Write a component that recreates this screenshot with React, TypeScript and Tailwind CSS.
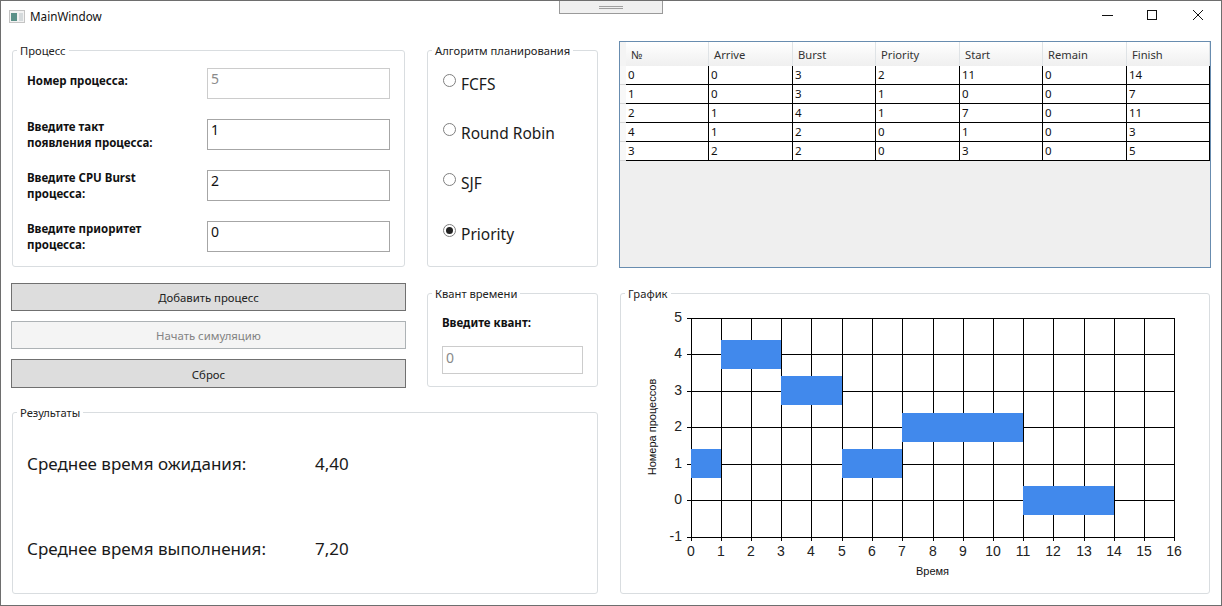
import React from "react"

const rows = [
    ["0", "0", "3", "2", "11", "0", "14"],
    ["1", "0", "3", "1", "0", "0", "7"],
    ["2", "1", "4", "1", "7", "0", "11"],
    ["4", "1", "2", "0", "1", "0", "3"],
    ["3", "2", "2", "0", "3", "0", "5"],
]
const headers = ["№", "Arrive", "Burst", "Priority", "Start", "Remain", "Finish"]

// chart grid lines, in page pixels
const xTicks = [691, 721, 751, 781, 811, 842, 872, 902, 933, 963, 993, 1023, 1053, 1084, 1114, 1144, 1174]
const yTicks = [318, 354, 391, 427, 464, 500, 537]
const bars = [
    { x: 691, w: 30, y: 449 },
    { x: 721, w: 60, y: 340 },
    { x: 781, w: 61, y: 376 },
    { x: 842, w: 60, y: 449 },
    { x: 902, w: 121, y: 413 },
    { x: 1023, w: 91, y: 486 },
]

function Group({ title, className, children }: { title: string; className: string; children?: React.ReactNode }) {
    return (
        <div className={`relative box-border rounded-[3px] border border-[#d9dde0] bg-white ${className}`}>
            <span className="absolute left-[4px] top-[-8px] bg-white px-[3px] text-[11.2px] leading-[16px] text-[#222]">{title}</span>
            {children}
        </div>
    )
}

function Field({ label, value, disabled }: { label: React.ReactNode; value: string; disabled?: boolean }) {
    return (
        <div className="flex h-[31px] items-start">
            <div className="w-[194px] pl-[14px] text-[11.5px] font-bold leading-[16px] text-[#111]">{label}</div>
            <input
                readOnly
                value={value}
                className={`box-border h-[31px] w-[183px] border px-[3px] pb-[10px] text-[14px] outline-none ${disabled ? "border-[#cccccc] text-[#8a8a8a]" : "border-[#a6a6a6] text-[#111]"}`}
            />
        </div>
    )
}

function Radio({ label, checked, className }: { label: string; checked?: boolean; className: string }) {
    return (
        <div className={`flex h-[24px] items-start pl-[15px] ${className}`}>
            <span className="mt-[2px] flex h-[13px] w-[13px] items-center justify-center rounded-full border border-[#808080] bg-white">
                {checked && <span className="h-[7px] w-[7px] rounded-full bg-[#222]" />}
            </span>
            <span className="ml-[5px] text-[15.5px] leading-[24px] text-[#1a1a1a]">{label}</span>
        </div>
    )
}

function Chart() {
    return (
        <svg viewBox="621 294 588 299" className="block h-[299px] w-[588px]" style={{ fontFamily: "'Liberation Sans', sans-serif" }}>
            {xTicks.map((x) => (
                <line key={x} x1={x + 0.5} x2={x + 0.5} y1={318} y2={541} stroke="#000" />
            ))}
            {yTicks.map((y) => (
                <line key={y} x1={687} x2={1175} y1={y + 0.5} y2={y + 0.5} stroke="#000" />
            ))}
            {bars.map((b) => (
                <rect key={b.x} x={b.x} y={b.y} width={b.w} height={29} fill="#4189ec" />
            ))}
            {xTicks.map((x, i) => (
                <text key={x} x={x} y={556} fontSize={14} textAnchor="middle" fill="#222">{i}</text>
            ))}
            {yTicks.map((y, i) => (
                <text key={y} x={682} y={y + 4} fontSize={14} textAnchor="end" fill="#222">{5 - i}</text>
            ))}
            <text x={932.5} y={575} fontSize={11} textAnchor="middle" fill="#111">Время</text>
            <text transform="translate(656 427) rotate(-90)" fontSize={11} textAnchor="middle" fill="#111">Номера процессов</text>
        </svg>
    )
}

export default function App() {
    return (
        <div className="relative box-border h-[606px] w-[1222px] overflow-hidden border border-[#6e6e6e] bg-white font-['Noto_Sans','Liberation_Sans',sans-serif]">
            {/* Designer handle at the top */}
            <div className="absolute left-[558px] top-[-1px] flex h-[14px] w-[104px] flex-col items-center justify-center gap-[1px] border border-[#9a9a9a] bg-[#f0f0f0]">
                <div className="h-px w-[24px] bg-[#a0a0a0]" />
                <div className="h-px w-[24px] bg-[#a0a0a0]" />
            </div>

            {/* Title bar */}
            <div className="flex h-[29px] items-center">
                <svg viewBox="0 0 16 13" className="ml-[8px] mt-[1px] h-[13px] w-[16px]">
                    <rect x="0.5" y="0.5" width="15" height="12" fill="#f2f2f2" stroke="#c4c4c4" />
                    <rect x="2" y="3" width="6" height="8" fill="#5a9088" />
                    <rect x="10" y="3" width="4" height="8" fill="#d5dadc" />
                </svg>
                <span className="ml-[5px] text-[11.7px] leading-[16px] text-[#111]">MainWindow</span>
                <div className="ml-auto flex items-center">
                    <svg viewBox="0 0 46 29" className="h-[29px] w-[46px]"><line x1="19" x2="30" y1="14.5" y2="14.5" stroke="#111" /></svg>
                    <svg viewBox="0 0 46 29" className="h-[29px] w-[46px]"><rect x="18.5" y="9.5" width="9" height="9" fill="none" stroke="#111" /></svg>
                    <svg viewBox="0 0 46 29" className="h-[29px] w-[46px]"><path d="M18 9l10 10M28 9l-10 10" fill="none" stroke="#111" /></svg>
                </div>
            </div>

            <div className="flex items-start pl-[11px]">
                {/* Left column */}
                <div className="w-[586px] pt-[20px]">
                    <div className="flex gap-[22px]">
                        <Group title="Процесс" className="h-[217px] w-[393px] pt-[17px]">
                            <div className="flex flex-col gap-[20px]">
                                <Field label={<span className="mt-[5px] block">Номер процесса:</span>} value="5" disabled />
                                <Field label={<>Введите такт<br />появления процесса:</>} value="1" />
                                <Field label={<>Введите CPU Burst<br />процесса:</>} value="2" />
                                <Field label={<>Введите приоритет<br />процесса:</>} value="0" />
                            </div>
                        </Group>
                        <Group title="Алгоритм планирования" className="h-[217px] w-[171px] pt-[21px]">
                            <Radio label="FCFS" className="" />
                            <Radio label="Round Robin" className="mt-[25px]" />
                            <Radio label="SJF" className="mt-[26px]" />
                            <Radio label="Priority" checked className="mt-[27px]" />
                        </Group>
                    </div>

                    <div className="flex items-start">
                        <div className="ml-[-1px] mt-[16px] flex w-[395px] flex-col gap-[10px] text-[11.35px]">
                            <button className="h-[28px] border border-[#707070] bg-[#dddddd] pt-[1px] text-[#222]">Добавить процесс</button>
                            <button className="h-[28px] border border-[#adb2b5] bg-[#f4f4f4] pt-[1px] text-[#838383]">Начать симуляцию</button>
                            <button className="h-[29px] border border-[#707070] bg-[#dddddd] pt-[2px] text-[#222]">Сброс</button>
                        </div>
                        <Group title="Квант времени" className="ml-[21px] mt-[26px] h-[94px] w-[171px] px-[14px] pt-[21px]">
                            <div className="text-[11.5px] font-bold leading-[16px] text-[#111]">Введите квант:</div>
                            <input readOnly value="0" className="mt-[15px] box-border h-[28px] w-[141px] border border-[#cccccc] px-[3px] pb-[6px] text-[14px] text-[#8a8a8a] outline-none" />
                        </Group>
                    </div>

                    <Group title="Результаты" className="mt-[24px] h-[182px] w-[586px] pl-[14px] text-[17px] leading-[24px] text-[#1a1a1a]">
                        <div className="mt-[39px] flex">
                            <span className="w-[288px]">Среднее время ожидания:</span>
                            <span>4,40</span>
                        </div>
                        <div className="mt-[61px] flex">
                            <span className="w-[288px]">Среднее время выполнения:</span>
                            <span>7,20</span>
                        </div>
                    </Group>
                </div>

                {/* Right column */}
                <div className="ml-[21px] pt-[11px]">
                    <div className="box-border h-[227px] w-[592px] border border-[#688caf] bg-[#efefef]">
                        <div className="flex h-[24px]">
                            <div className="w-[6px] bg-[#f4f4f4]" />
                            <div className="grid grid-cols-[83px_84px_83px_84px_83px_84px_83px]">
                                {headers.map((h) => (
                                    <div key={h} className="box-border border-r border-b-2 border-r-[#dfe3e6] border-b-[#d5d5d5] bg-gradient-to-b from-white to-[#eeeeee] pl-[5px] text-[11.2px] leading-[26px] text-[#333]">{h}</div>
                                ))}
                            </div>
                        </div>
                        {rows.map((row, i) => (
                            <div key={i} className="flex h-[19px]">
                                <div className="box-border w-[6px] border-b border-[#d5d5d5] bg-[#f8f8f8]" />
                                <div className="grid grid-cols-[83px_84px_83px_84px_83px_84px_83px]">
                                    {row.map((v, j) => (
                                        <div key={j} className="box-border border-r border-b border-black bg-white pl-[2px] text-[11.5px] leading-[18px] text-[#111]">{v}</div>
                                    ))}
                                </div>
                            </div>
                        ))}
                    </div>
                    <Group title="График" className="ml-[1px] mt-[25px] h-[301px] w-[590px]">
                        <Chart />
                    </Group>
                </div>
            </div>
        </div>
    )
}
